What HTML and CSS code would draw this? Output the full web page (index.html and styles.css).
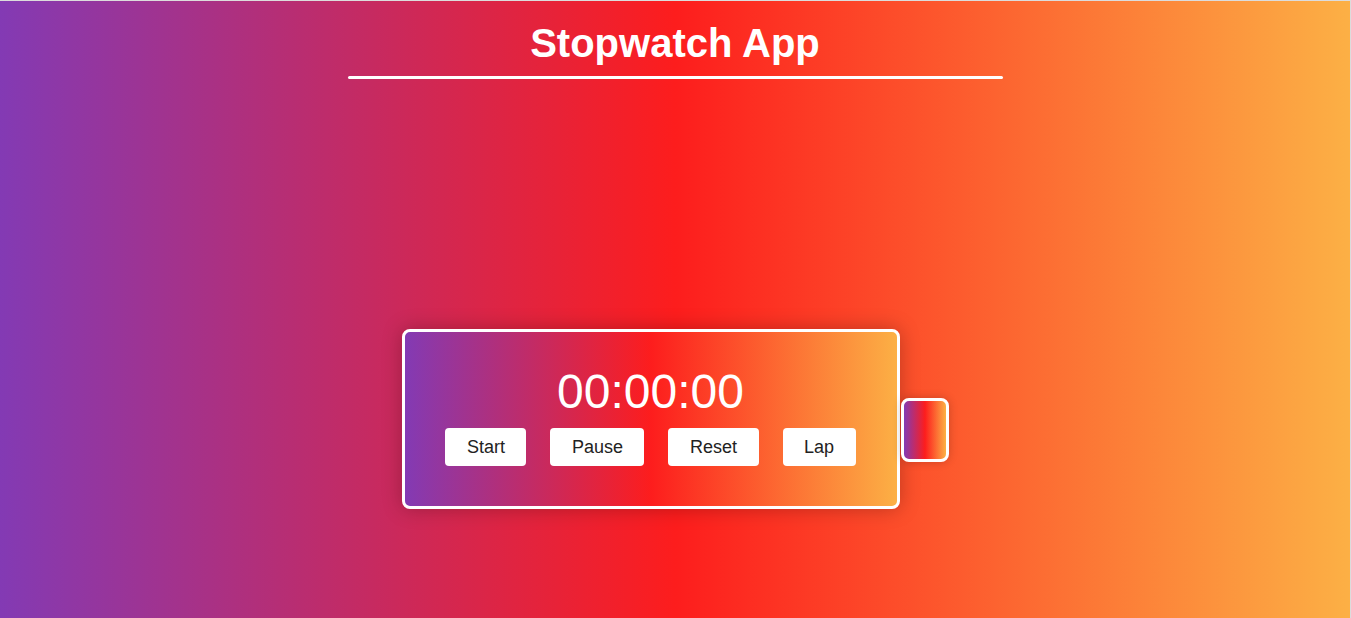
FILE: index.html
```html
<!DOCTYPE html>
<html lang="en">
<head>
    <meta charset="UTF-8">
    <meta name="viewport" content="width=device-width, initial-scale=1.0">
    <title>Stopwatch App</title>
    <link rel="stylesheet" href="styles.css">
</head>
<body>
    <header class="page-header">
        <h1>Stopwatch App</h1>
        <div class="title-line"></div>
    </header>

    <main class="stage">
        <div class="stopwatch">
            <div class="timer" id="timer">00:00:00</div>
            <div class="controls">
                <button class="btn">Start</button>
                <button class="btn">Pause</button>
                <button class="btn">Reset</button>
                <button class="btn">Lap</button>
            </div>
        </div>
        <ul class="laps"></ul>
    </main>
</body>
</html>
```

FILE: styles.css
```css
/* Base */
* {
    margin: 0;
    padding: 0;
    box-sizing: border-box;
}

html {
    border-top: 1px solid #dcdcdc;
    border-right: 1px solid #dcdcdc;
}

body {
    min-height: 617px;
    font-family: "Liberation Sans", Arial, sans-serif;
    background: linear-gradient(90deg, #833ab4 0%, #fd1d1d 50%, #fcb045 100%);
    color: #fff;
}

/* Header */
.page-header {
    display: flex;
    flex-direction: column;
    align-items: center;
    padding-top: 19px;
}

.page-header h1 {
    font-size: 40px;
    font-weight: bold;
    line-height: 46px;
}

.title-line {
    width: 655px;
    height: 3px;
    margin-top: 10px;
    background: #fff;
    border-radius: 2px;
}

/* Stopwatch */
.stage {
    display: flex;
    justify-content: center;
    align-items: flex-start;
    gap: 1px;
    padding-top: 250px;
}

.stopwatch {
    width: 498px;
    padding: 32px 0 40px;
    border: 3px solid #fff;
    border-radius: 8px;
    background: linear-gradient(90deg, #833ab4 0%, #fd1d1d 50%, #fcb045 100%);
    box-shadow: 0 0 20px rgba(0, 0, 0, 0.25);
    display: flex;
    flex-direction: column;
    align-items: center;
}

.timer {
    font-size: 48px;
    line-height: 55px;
    margin-bottom: 9px;
}

.controls {
    display: flex;
    gap: 24px;
}

.btn {
    font-family: "Liberation Sans", Arial, sans-serif;
    font-size: 18px;
    line-height: 22px;
    color: #222;
    background: #fff;
    border: none;
    border-radius: 4px;
    padding: 8px 21.5px;
    cursor: pointer;
}

.laps {
    list-style: none;
    width: 48px;
    height: 64px;
    margin-top: 69px;
    border: 3px solid #fff;
    border-radius: 8px;
    background: linear-gradient(90deg, #833ab4 0%, #fd1d1d 50%, #fcb045 100%);
    box-shadow: 0 0 10px rgba(0, 0, 0, 0.2);
}
```
